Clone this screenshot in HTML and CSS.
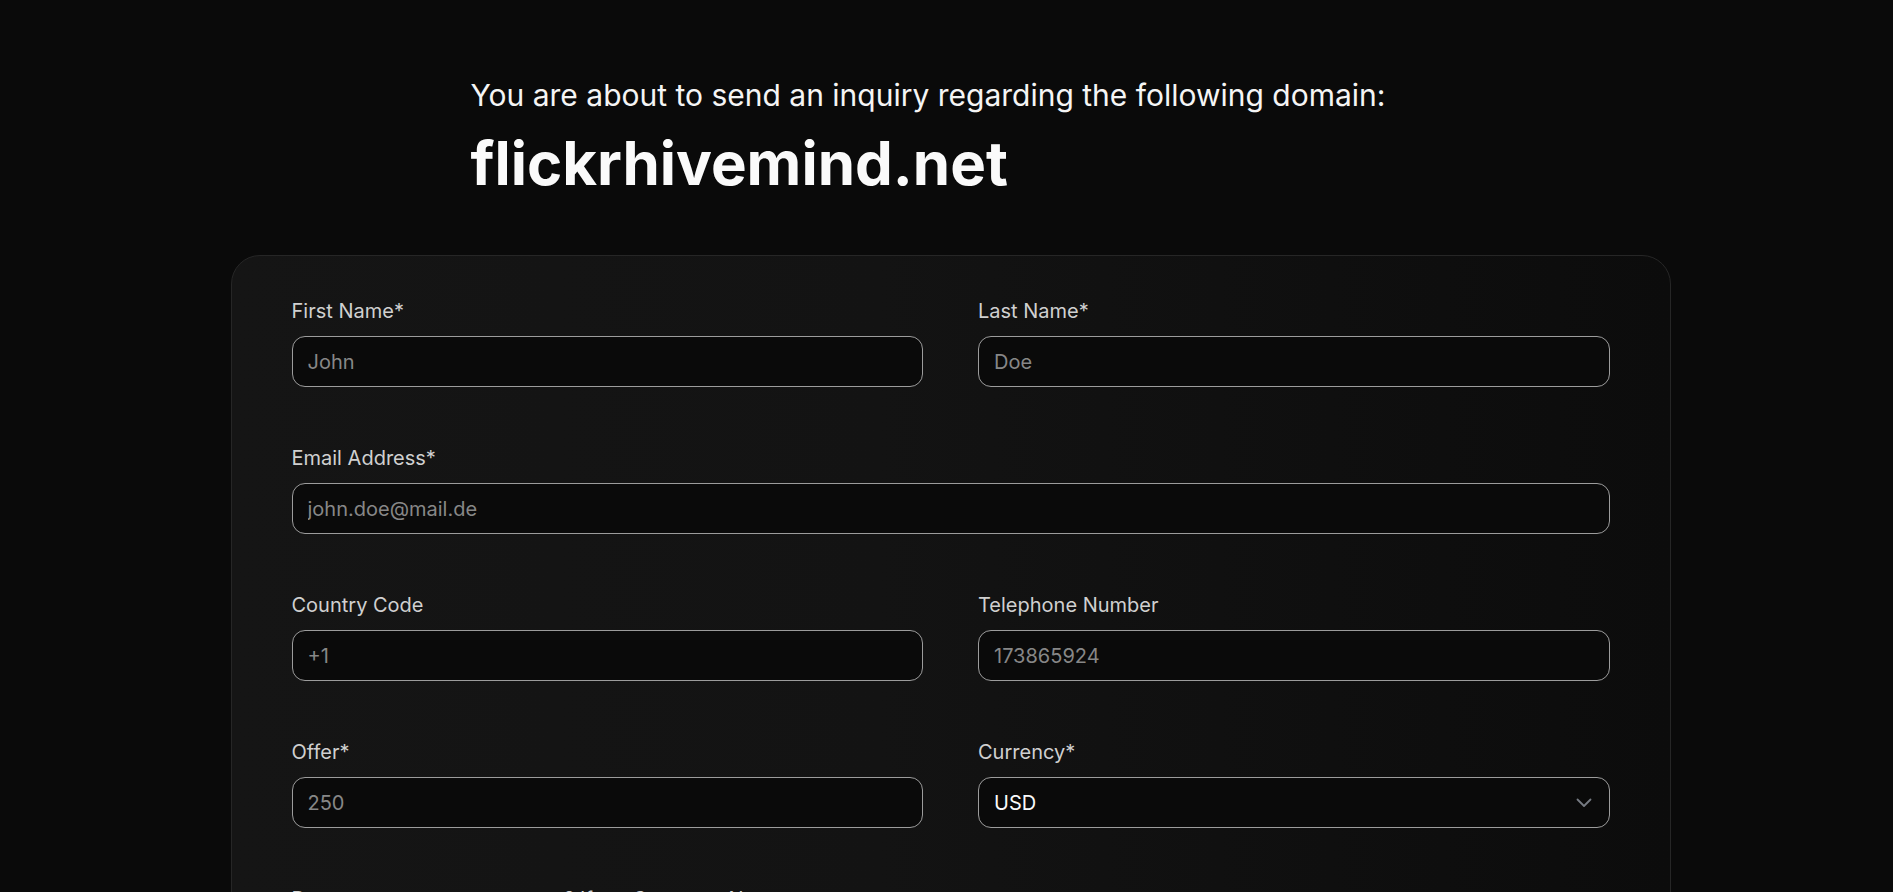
FILE: index.html
```html
<!DOCTYPE html>
<html lang="en">
<head>
<meta charset="utf-8">
<title>Domain Inquiry</title>
<link rel="stylesheet" href="styles.css">
</head>
<body>
<div class="page">
  <header class="intro">
    <p class="intro-lead">You are about to send an inquiry regarding the following domain:</p>
    <h1 class="intro-domain">flickrhivemind.net</h1>
  </header>
  <form class="card">
    <div class="grid">
      <div class="field">
        <label class="label" for="fn">First Name*</label>
        <input class="input" id="fn" type="text" placeholder="John">
      </div>
      <div class="field">
        <label class="label" for="ln">Last Name*</label>
        <input class="input" id="ln" type="text" placeholder="Doe">
      </div>
      <div class="field field-wide">
        <label class="label" for="em">Email Address*</label>
        <input class="input" id="em" type="email" placeholder="john.doe@mail.de">
      </div>
      <div class="field">
        <label class="label" for="cc">Country Code</label>
        <input class="input" id="cc" type="text" placeholder="+1">
      </div>
      <div class="field">
        <label class="label" for="tel">Telephone Number</label>
        <input class="input" id="tel" type="text" placeholder="173865924">
      </div>
      <div class="field">
        <label class="label" for="of">Offer*</label>
        <input class="input" id="of" type="text" placeholder="250">
      </div>
      <div class="field">
        <label class="label" for="cur">Currency*</label>
        <div class="select-wrap">
          <select class="input select" id="cur">
            <option>USD</option>
            <option>EUR</option>
            <option>GBP</option>
          </select>
          <svg class="chevron" width="20" height="20" viewBox="0 0 20 20" fill="none" stroke="currentColor" stroke-width="1.8" stroke-linecap="round" stroke-linejoin="round"><path d="M3.5 7.5l6.5 6.5 6.5-6.5"/></svg>
        </div>
      </div>
      <div class="field field-wide">
        <label class="label" for="co">Do you represent a company? If so, Company Name</label>
        <input class="input" id="co" type="text" placeholder="">
      </div>
    </div>
  </form>
</div>
</body>
</html>
```
FILE: styles.css
```css
* { box-sizing: border-box; }
html, body {
  margin: 0;
  background: #0a0a0a;
  font-family: Inter, "Noto Sans", "Liberation Sans", sans-serif;
  color: #f5f5f5;
}
.page {
  padding: 77px 0 80px 8px;
}
.intro {
  max-width: 960px;
  margin: 0 auto;
}
.intro-lead {
  margin: 0;
  font-size: 30px;
  line-height: 36px;
  font-weight: 400;
  color: #f5f5f5;
}
.intro-domain {
  margin: 14px 0 0;
  font-size: 60px;
  line-height: 72px;
  font-weight: 700;
  color: #fafafa;
}
.card {
  max-width: 1440px;
  margin: 56px auto 0;
  padding: 41px 60px 60px;
  border: 1px solid #262626;
  border-radius: 29px;
  background: linear-gradient(90deg, #151515 0%, #131313 45%, #0c0c0c 100%);
}
.grid {
  display: grid;
  grid-template-columns: 1fr 1fr;
  column-gap: 55px;
  row-gap: 57px;
}
.field {
  display: flex;
  flex-direction: column;
  gap: 11px;
}
.field-wide { grid-column: 1 / -1; }
.label {
  font-size: 20px;
  line-height: 28px;
  color: #d0d0d0;
}
.input {
  height: 51px;
  width: 100%;
  padding: 0 15px;
  border: 1px solid #9c9c9c;
  border-radius: 13px;
  background: #0a0a0a;
  color: #fafafa;
  font-family: inherit;
  font-size: 20px;
  outline: none;
}
.input::placeholder { color: #878787; }
.select-wrap {
  position: relative;
}
.select {
  appearance: none;
  -webkit-appearance: none;
  color: #fafafa;
}
.chevron {
  position: absolute;
  right: 16px;
  top: 15px;
  color: #767b83;
  pointer-events: none;
}
```
